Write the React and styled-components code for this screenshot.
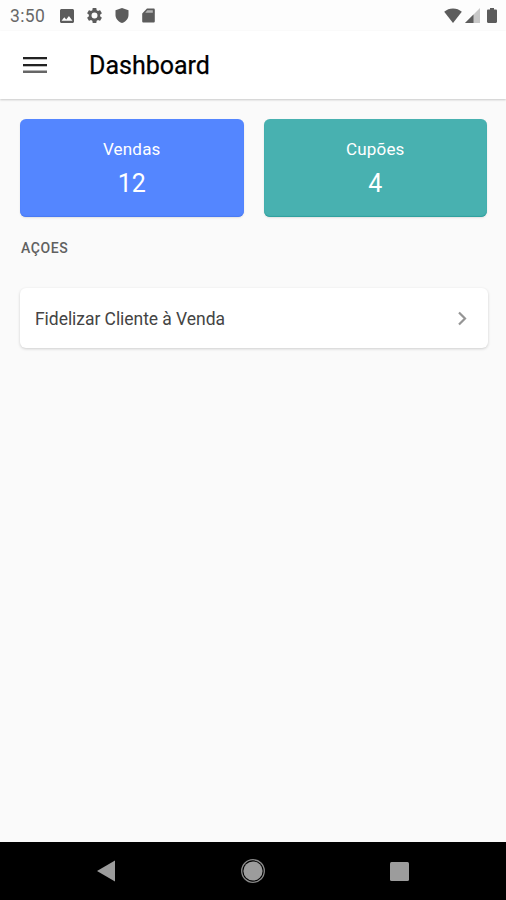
import React from 'react';
import styled, { createGlobalStyle } from 'styled-components';

const GlobalStyle = createGlobalStyle`
  * {
    box-sizing: border-box;
  }
  body {
    margin: 0;
    background-color: #fafafa;
    font-family: Roboto, 'Liberation Sans', sans-serif;
  }
`;

const Screen = styled.div`
  display: flex;
  flex-direction: column;
  width: 506px;
  height: 900px;
  overflow: hidden;
  background-color: #fafafa;
`;

const StatusBar = styled.div`
  display: flex;
  align-items: center;
  flex-shrink: 0;
  height: 31px;
  padding: 0 9px 0 10px;
  background-color: #fdfdfd;
  color: #5c5c5c;
  svg {
    display: block;
    fill: currentColor;
  }
`;

const Clock = styled.span`
  width: 50px;
  padding-top: 1px;
  font-size: 17.5px;
  line-height: 31px;
  letter-spacing: 0.4px;
  color: #686868;
`;

const StatusIcons = styled.div`
  display: flex;
  align-items: center;
  gap: ${(props) => props.$gap}px;
`;

const Battery = styled.div`
  margin-left: 4px;
`;

const Spacer = styled.div`
  flex: 1;
`;

const Header = styled.header`
  display: flex;
  align-items: center;
  flex-shrink: 0;
  height: 68px;
  padding: 0 23px;
  background-color: #fff;
  box-shadow: 0 1px 2px rgba(0, 0, 0, 0.2);
`;

const MenuButton = styled.button`
  display: block;
  width: 24px;
  height: 16px;
  margin-right: 42px;
  padding: 0;
  border: 0;
  background: none;
  svg {
    display: block;
  }
`;

const Title = styled.h1`
  margin: 2px 0 0;
  font-size: 25px;
  font-weight: 400;
  line-height: 32px;
  color: #000;
  -webkit-text-stroke: 0.25px #000;
`;

const Content = styled.main`
  flex: 1;
  padding: 20px 18px 0 20px;
`;

const Stats = styled.div`
  display: flex;
  gap: 20px;
  margin-right: 1px;
`;

const StatCard = styled.div`
  flex: 1;
  height: 98px;
  padding-top: 18px;
  border-radius: 6px;
  background-color: ${(props) => props.$color};
  box-shadow: inset 0 -1px 1px ${(props) => props.$edge}, 0 1px 2px rgba(0, 0, 0, 0.1);
  color: #fff;
  text-align: center;
  .label {
    font-size: 17px;
    line-height: 25px;
    letter-spacing: 0.2px;
  }
  .value {
    font-size: 25px;
    line-height: 44px;
  }
`;

const SectionTitle = styled.h2`
  margin: 20px 0 0 1px;
  font-size: 14px;
  font-weight: 500;
  line-height: 22px;
  letter-spacing: 0.6px;
  color: #606060;
`;

const ActionRow = styled.div`
  display: flex;
  align-items: center;
  justify-content: space-between;
  height: 60px;
  margin-top: 29px;
  padding: 0 21px 0 15px;
  border-radius: 6px;
  background-color: #fff;
  box-shadow: 0 1px 3px rgba(0, 0, 0, 0.18);
  font-size: 17.5px;
  letter-spacing: -0.05px;
  color: #444;
  span {
    padding-top: 2px;
  }
`;

const NavBar = styled.nav`
  display: flex;
  align-items: center;
  justify-content: space-between;
  flex-shrink: 0;
  height: 58px;
  padding: 0 97px;
  background-color: #000;
`;

const ImageIcon = () => (
  <svg width="14" height="14" viewBox="3 3 18 18">
    <path d="M21 19V5c0-1.1-.9-2-2-2H5c-1.1 0-2 .9-2 2v14c0 1.1.9 2 2 2h14c1.1 0 2-.9 2-2zM8.5 13.5l2.5 3.01L14.5 12l4.5 6H5l3.5-4.5z" />
  </svg>
);

const GearIcon = () => (
  <svg width="15" height="15" viewBox="2 2 20 20">
    <path d="M19.43 12.98c.04-.32.07-.64.07-.98s-.03-.66-.07-.98l2.11-1.65c.19-.15.24-.42.12-.64l-2-3.46c-.12-.22-.39-.3-.61-.22l-2.49 1c-.52-.4-1.08-.73-1.69-.98l-.38-2.65C14.46 2.18 14.25 2 14 2h-4c-.25 0-.46.18-.49.42l-.38 2.65c-.61.25-1.17.59-1.69.98l-2.49-1c-.23-.09-.49 0-.61.22l-2 3.46c-.13.22-.07.49.12.64l2.11 1.65c-.04.32-.07.65-.07.98s.03.66.07.98l-2.11 1.65c-.19.15-.24.42-.12.64l2 3.46c.12.22.39.3.61.22l2.49-1c.52.4 1.08.73 1.69.98l.38 2.65c.03.24.24.42.49.42h4c.25 0 .46-.18.49-.42l.38-2.65c.61-.25 1.17-.59 1.69-.98l2.49 1c.23.09.49 0 .61-.22l2-3.46c.12-.22.07-.49-.12-.64l-2.11-1.65zM12 16a4 4 0 1 1 0-8 4 4 0 0 1 0 8z" />
  </svg>
);

const ShieldIcon = () => (
  <svg width="14" height="15" viewBox="0 0 14 15">
    <path d="M7 0l6.500 2.300V7c0 3.600-2.500 6.600-6.500 8C3 13.600.5 10.600.5 7V2.300z" />
  </svg>
);

const SdCardIcon = () => (
  <svg width="13" height="15" viewBox="0 0 13 15">
    <path d="M5 .5h6.500c.8 0 1.300.5 1.300 1.300v11.400c0 .8-.5 1.300-1.300 1.300h-10c-.8 0-1.300-.5-1.300-1.300V5.500z" />
    <path d="M5.200 2.300h5.600v2.400H3.200z" fill="#b4b4b4" />
  </svg>
);

const WifiIcon = () => (
  <svg width="18" height="15" viewBox="0 0 18 15">
    <path d="M9 15L.2 3.800C2.600 1.600 5.600.4 9 .4s6.400 1.200 8.800 3.400z" />
  </svg>
);

const SignalIcon = () => (
  <svg width="15" height="15" viewBox="0 0 15 15">
    <path d="M15 0v15H0z" fill="#c8c8c8" />
    <path d="M8.500 6.500V15H0z" />
  </svg>
);

const BatteryIcon = () => (
  <svg width="10" height="15" viewBox="0 0 10 15">
    <path d="M3 0h4v1.600h1.800c.7 0 1.200.5 1.200 1.200v11c0 .7-.5 1.200-1.200 1.200H1.200C.5 15 0 14.500 0 13.800v-11c0-.7.5-1.200 1.200-1.200H3z" />
  </svg>
);

const stats = [
  { id: 1, label: 'Vendas', value: 12, color: '#5486ff', edge: '#4a7bf2' },
  { id: 2, label: 'Cupões', value: 4, color: '#48b1b0', edge: '#2fa09e' },
];

const App = () => {
  return (
    <Screen>
      <GlobalStyle />
      <StatusBar>
        <Clock>3:50</Clock>
        <StatusIcons $gap={13}>
          <ImageIcon />
          <GearIcon />
          <ShieldIcon />
          <SdCardIcon />
        </StatusIcons>
        <Spacer />
        <StatusIcons $gap={3}>
          <WifiIcon />
          <SignalIcon />
          <Battery>
            <BatteryIcon />
          </Battery>
        </StatusIcons>
      </StatusBar>

      <Header>
        <MenuButton aria-label="Menu">
          <svg width="24" height="16" viewBox="0 0 24 16">
            <path d="M0 0h24v2.300H0z" fill="#222" />
            <path d="M0 7h24v2.300H0z" fill="#222" />
            <path d="M0 13.500h24v2.500H0z" fill="#666" />
          </svg>
        </MenuButton>
        <Title>Dashboard</Title>
      </Header>

      <Content>
        <Stats>
          {stats.map((v) => (
            <StatCard key={v.id} $color={v.color} $edge={v.edge}>
              <div className="label">{v.label}</div>
              <div className="value">{v.value}</div>
            </StatCard>
          ))}
        </Stats>
        <SectionTitle>AÇOES</SectionTitle>
        <ActionRow>
          <span>Fidelizar Cliente à Venda</span>
          <svg width="9" height="15" viewBox="0 0 9 15">
            <path d="M1 1.500l6 6-6 6" fill="none" stroke="#959595" strokeWidth="2.200" />
          </svg>
        </ActionRow>
      </Content>

      <NavBar>
        <svg width="18" height="22" viewBox="0 0 18 22">
          <path d="M18 .5v21L0 11z" fill="#9c9c9c" />
        </svg>
        <svg width="24" height="24" viewBox="0 0 24 24">
          <circle cx="12" cy="12" r="11.300" fill="none" stroke="#8a8a8a" strokeWidth="1.300" />
          <circle cx="12" cy="12" r="9.600" fill="#9c9c9c" />
        </svg>
        <svg width="19" height="19" viewBox="0 0 19 19">
          <rect width="19" height="19" rx="1.500" fill="#9c9c9c" />
        </svg>
      </NavBar>
    </Screen>
  );
};

export default App;
